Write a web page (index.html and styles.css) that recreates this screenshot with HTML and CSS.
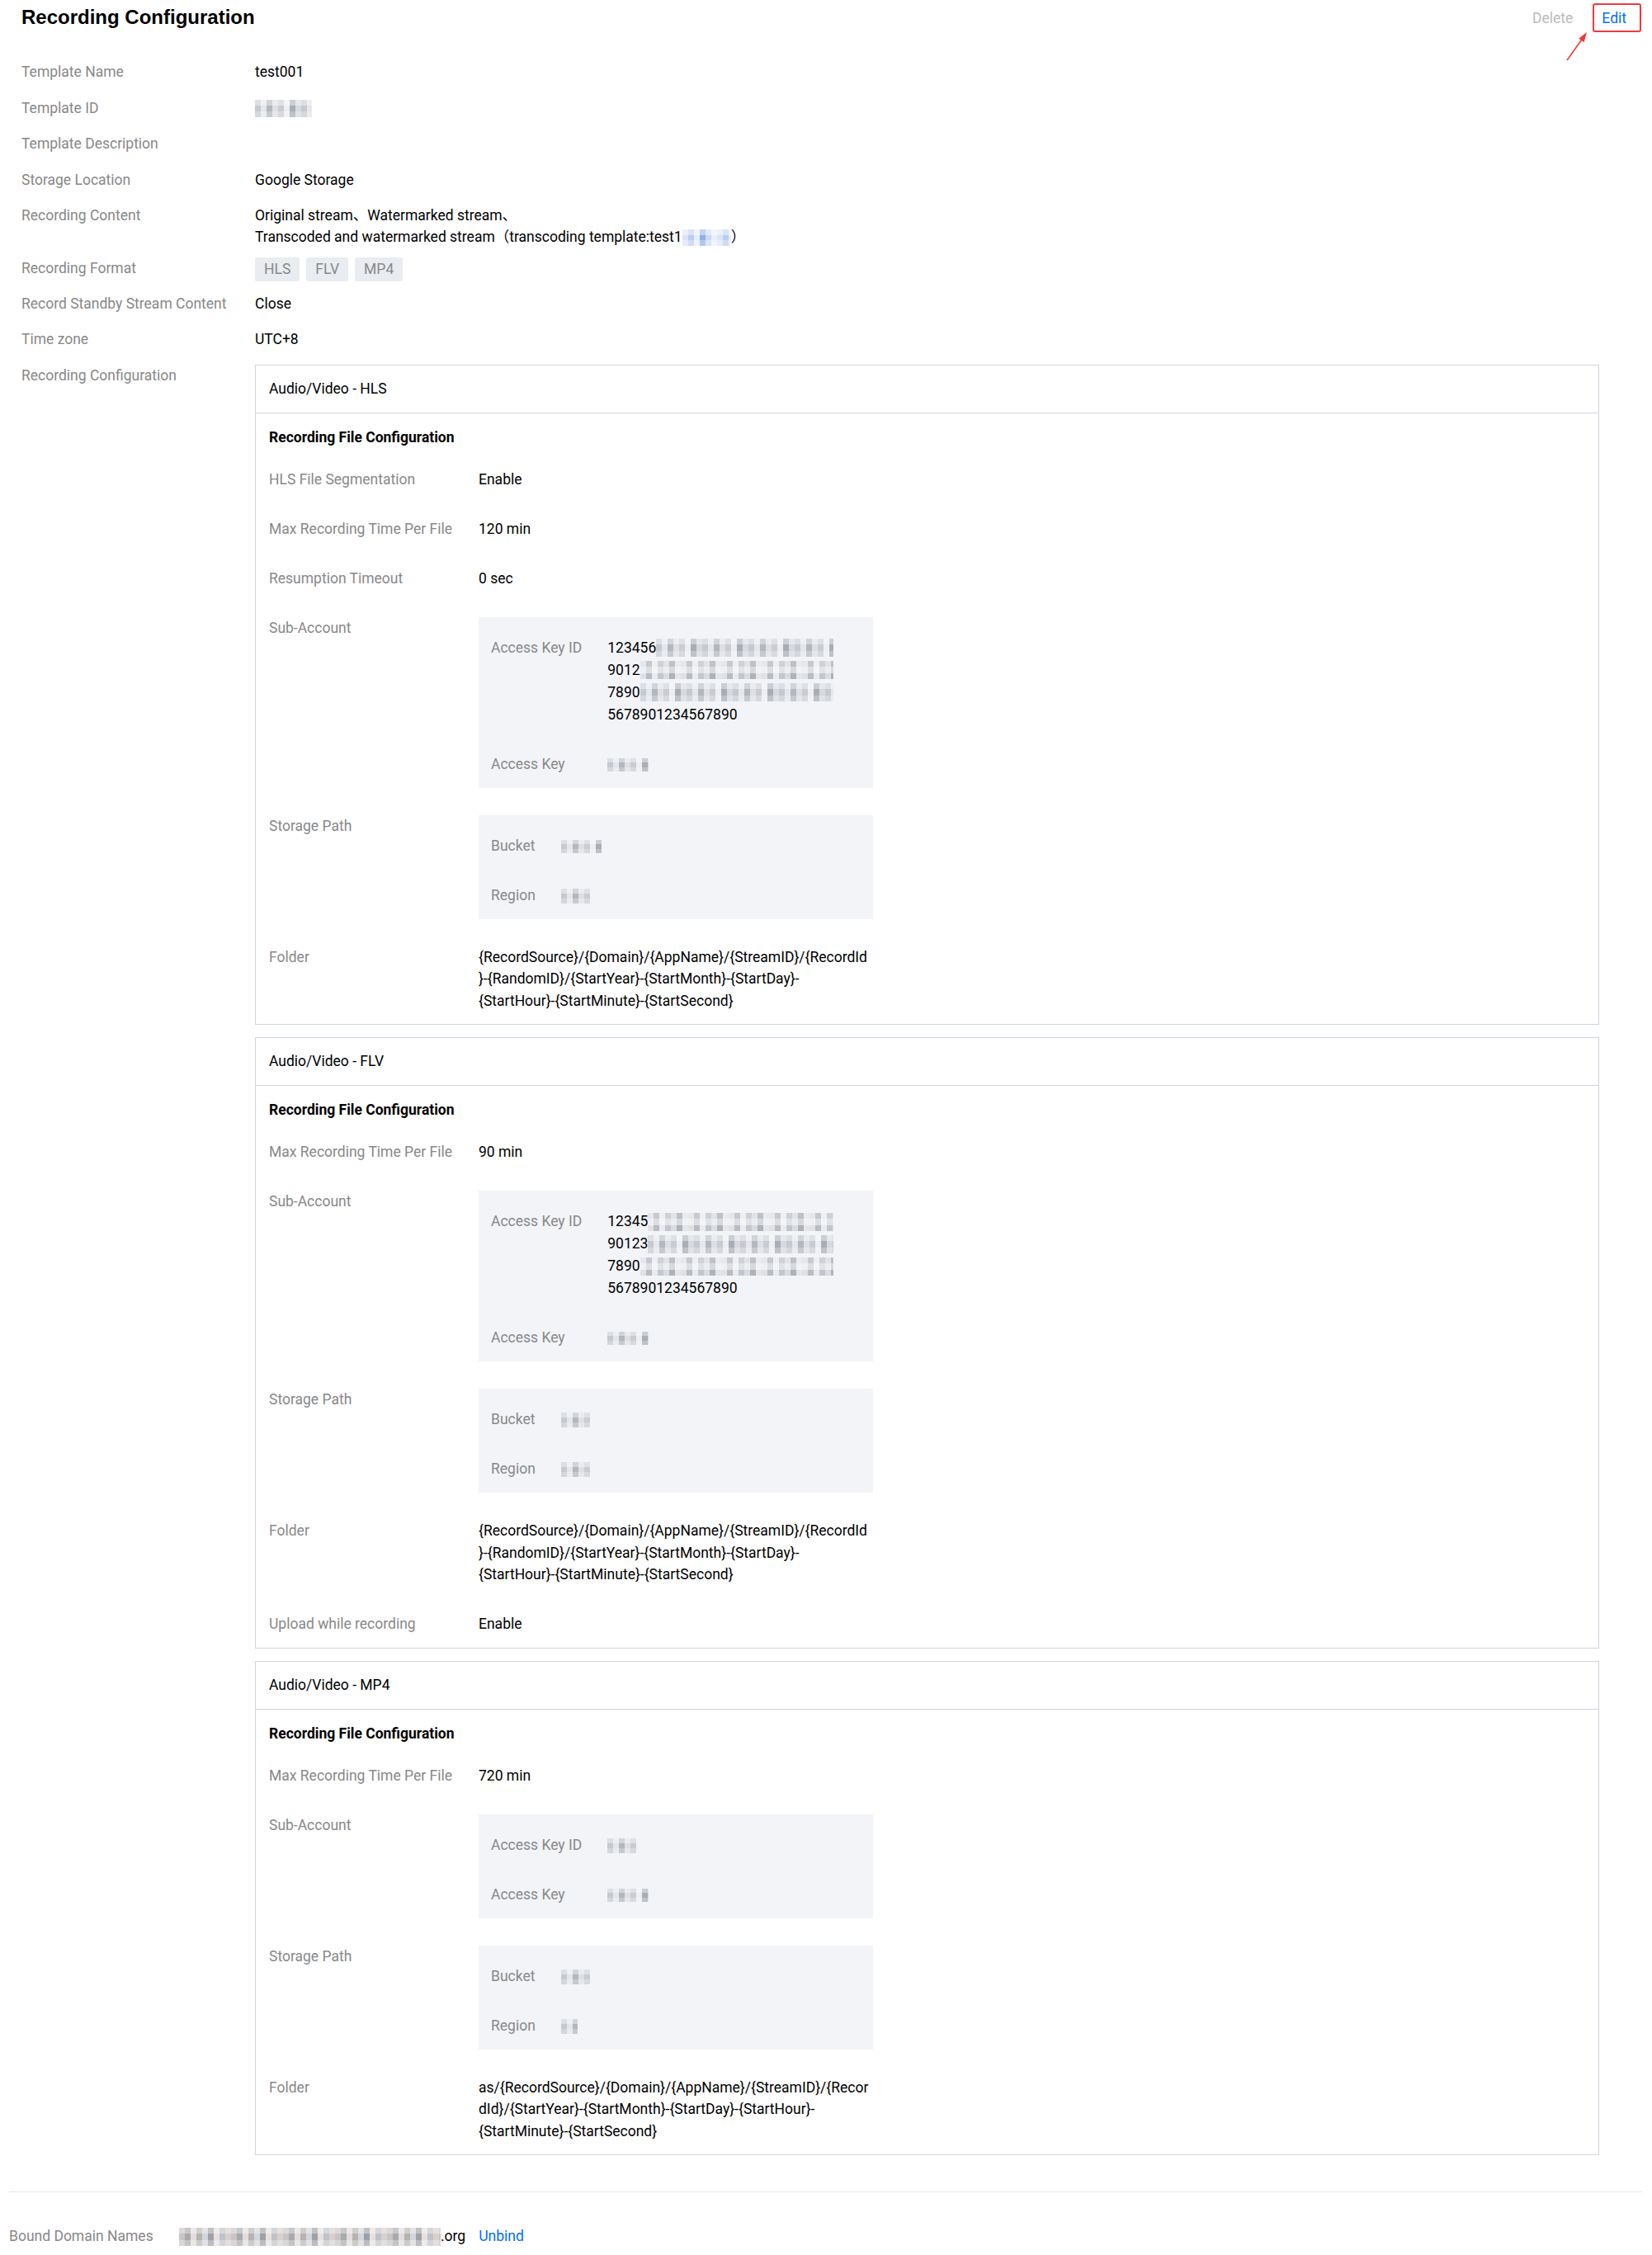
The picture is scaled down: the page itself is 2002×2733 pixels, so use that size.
FILE: index.html
```html
<!DOCTYPE html>
<html lang="en">
<head>
  <meta charset="UTF-8">
  <meta name="viewport" content="width=device-width, initial-scale=1.0">
  <title>Recording Configuration</title>
  <link rel="stylesheet" href="styles.css">
</head>
<body>
  <div class="page">
    <div class="detail-hd">
      <h2 class="title">Recording Configuration</h2>
      <div class="actions">
        <a class="btn-delete" href="#">Delete</a>
        <a class="btn-edit" href="#">Edit
          <svg class="arrow" width="32" height="42" viewBox="0 0 32 42">
            <path d="M4 38 L22.5 12" stroke="#f23a3a" stroke-width="1.6" fill="none"/>
            <polygon points="28,4 24.6,16.2 18.2,11.7" fill="#f23a3a"/>
          </svg>
        </a>
      </div>
    </div>

    <div class="info">
      <div class="row">
        <div class="row-label">Template Name</div>
        <div class="row-value">test001</div>
      </div>
      <div class="row">
        <div class="row-label">Template ID</div>
        <div class="row-value"><i class="mosaic mosaic-id"></i></div>
      </div>
      <div class="row">
        <div class="row-label">Template Description</div>
        <div class="row-value"></div>
      </div>
      <div class="row">
        <div class="row-label">Storage Location</div>
        <div class="row-value">Google Storage</div>
      </div>
      <div class="row">
        <div class="row-label">Recording Content</div>
        <div class="row-value">Original stream、Watermarked stream、<br>Transcoded and watermarked stream（transcoding template:test1<i class="mosaic mosaic-blue mosaic-tpl"></i>）</div>
      </div>
      <div class="row row-tags">
        <div class="row-label">Recording Format</div>
        <div class="row-value">
          <span class="tag">HLS</span><span class="tag">FLV</span><span class="tag">MP4</span>
        </div>
      </div>
      <div class="row">
        <div class="row-label">Record Standby Stream Content</div>
        <div class="row-value">Close</div>
      </div>
      <div class="row">
        <div class="row-label">Time zone</div>
        <div class="row-value">UTC+8</div>
      </div>
      <div class="row">
        <div class="row-label">Recording Configuration</div>
        <div class="row-value">

          <div class="card">
            <div class="card-hd">Audio/Video - HLS</div>
            <div class="card-bd">
              <div class="section-title">Recording File Configuration</div>
              <div class="field">
                <div class="field-label">HLS File Segmentation</div>
                <div class="field-value">Enable</div>
              </div>
              <div class="field">
                <div class="field-label">Max Recording Time Per File</div>
                <div class="field-value">120 min</div>
              </div>
              <div class="field">
                <div class="field-label">Resumption Timeout</div>
                <div class="field-value">0 sec</div>
              </div>
              <div class="field">
                <div class="field-label">Sub-Account</div>
                <div class="kv-box">
                  <div class="kv-label">Access Key ID</div>
                  <div class="kv-value">
                    <div class="key-line">123456<i class="mosaic"></i></div>
                    <div class="key-line">9012<i class="mosaic mosaic-alt"></i></div>
                    <div class="key-line">7890<i class="mosaic"></i></div>
                    <div>5678901234567890</div>
                  </div>
                  <div class="kv-label">Access Key</div>
                  <div class="kv-value"><i class="mosaic mosaic-ak"></i></div>
                </div>
              </div>
              <div class="field">
                <div class="field-label">Storage Path</div>
                <div class="kv-box">
                  <div class="kv-label">Bucket</div>
                  <div class="kv-value"><i class="mosaic mosaic-md"></i></div>
                  <div class="kv-label">Region</div>
                  <div class="kv-value"><i class="mosaic mosaic-sm"></i></div>
                </div>
              </div>
              <div class="field">
                <div class="field-label">Folder</div>
                <div class="field-value folder">{RecordSource}/{Domain}/{AppName}/{StreamID}/{RecordId<br>}-{RandomID}/{StartYear}-{StartMonth}-{StartDay}-<br>{StartHour}-{StartMinute}-{StartSecond}</div>
              </div>
            </div>
          </div>

          <div class="card">
            <div class="card-hd">Audio/Video - FLV</div>
            <div class="card-bd">
              <div class="section-title">Recording File Configuration</div>
              <div class="field">
                <div class="field-label">Max Recording Time Per File</div>
                <div class="field-value">90 min</div>
              </div>
              <div class="field">
                <div class="field-label">Sub-Account</div>
                <div class="kv-box">
                  <div class="kv-label">Access Key ID</div>
                  <div class="kv-value">
                    <div class="key-line">12345<i class="mosaic mosaic-alt"></i></div>
                    <div class="key-line">90123<i class="mosaic"></i></div>
                    <div class="key-line">7890<i class="mosaic mosaic-alt"></i></div>
                    <div>5678901234567890</div>
                  </div>
                  <div class="kv-label">Access Key</div>
                  <div class="kv-value"><i class="mosaic mosaic-ak"></i></div>
                </div>
              </div>
              <div class="field">
                <div class="field-label">Storage Path</div>
                <div class="kv-box">
                  <div class="kv-label">Bucket</div>
                  <div class="kv-value"><i class="mosaic mosaic-sm"></i></div>
                  <div class="kv-label">Region</div>
                  <div class="kv-value"><i class="mosaic mosaic-sm"></i></div>
                </div>
              </div>
              <div class="field">
                <div class="field-label">Folder</div>
                <div class="field-value folder">{RecordSource}/{Domain}/{AppName}/{StreamID}/{RecordId<br>}-{RandomID}/{StartYear}-{StartMonth}-{StartDay}-<br>{StartHour}-{StartMinute}-{StartSecond}</div>
              </div>
              <div class="field">
                <div class="field-label">Upload while recording</div>
                <div class="field-value">Enable</div>
              </div>
            </div>
          </div>

          <div class="card">
            <div class="card-hd">Audio/Video - MP4</div>
            <div class="card-bd">
              <div class="section-title">Recording File Configuration</div>
              <div class="field">
                <div class="field-label">Max Recording Time Per File</div>
                <div class="field-value">720 min</div>
              </div>
              <div class="field">
                <div class="field-label">Sub-Account</div>
                <div class="kv-box">
                  <div class="kv-label">Access Key ID</div>
                  <div class="kv-value"><i class="mosaic mosaic-sm"></i></div>
                  <div class="kv-label">Access Key</div>
                  <div class="kv-value"><i class="mosaic mosaic-ak"></i></div>
                </div>
              </div>
              <div class="field">
                <div class="field-label">Storage Path</div>
                <div class="kv-box">
                  <div class="kv-label">Bucket</div>
                  <div class="kv-value"><i class="mosaic mosaic-sm"></i></div>
                  <div class="kv-label">Region</div>
                  <div class="kv-value"><i class="mosaic mosaic-xs"></i></div>
                </div>
              </div>
              <div class="field">
                <div class="field-label">Folder</div>
                <div class="field-value folder">as/{RecordSource}/{Domain}/{AppName}/{StreamID}/{Recor<br>dId}/{StartYear}-{StartMonth}-{StartDay}-{StartHour}-<br>{StartMinute}-{StartSecond}</div>
              </div>
            </div>
          </div>

        </div>
      </div>
    </div>

    <div class="footer">
      <div class="footer-label">Bound Domain Names</div>
      <div class="footer-value"><i class="mosaic mosaic-domain"></i>.org<a class="btn-unbind" href="#">Unbind</a></div>
    </div>
  </div>
</body>
</html>
```

FILE: styles.css
```css
body {
  margin: 0;
  font-family: Roboto, "Noto Sans CJK SC", sans-serif;
  font-size: 17.5px;
  color: #000;
  background: #fff;
}
a {
  text-decoration: none;
}
.page {
  padding: 0 12px 0 11px;
}

/* header */
.detail-hd {
  display: flex;
  justify-content: space-between;
  align-items: center;
  height: 42px;
  padding: 0 19px 0 15px;
}
.title {
  margin: 0;
  font: bold 24px/42px "Liberation Sans", Arial, sans-serif;
  color: #000;
}
.actions {
  display: flex;
  gap: 35px;
  line-height: 26px;
  margin-top: 2px;
}
.btn-delete {
  color: #bbb;
}
.btn-edit {
  position: relative;
  color: #006eff;
}
.btn-edit::after {
  content: '';
  position: absolute;
  top: -5px;
  bottom: -4px;
  left: -11px;
  right: -18px;
  border: 2px solid #f0393f;
  border-radius: 3px;
}
.arrow {
  position: absolute;
  left: -46px;
  top: 26px;
}

/* info rows */
.info {
  margin-top: 32px;
  padding: 0 52px 0 15px;
}
.row {
  display: flex;
  line-height: 26px;
  margin-bottom: 17.5px;
}
.row:last-child {
  margin-bottom: 0;
}
.row-label {
  flex: none;
  width: 283px;
  color: #888;
}
.row-value {
  flex: 1;
  min-width: 0;
}
.row-tags {
  margin-top: -6px;
  margin-bottom: 14px;
}
.tag {
  display: inline-block;
  height: 29px;
  line-height: 29px;
  padding: 0 11px;
  margin-right: 8px;
  border-radius: 2px;
  background: #e9ecf1;
  color: #888;
}

/* cards */
.card {
  border: 1px solid #cfd5de;
  margin-bottom: 15px;
}
.card:last-child {
  margin-bottom: 0;
}
.card-hd {
  height: 57px;
  line-height: 57px;
  padding: 0 16px;
  border-bottom: 1px solid #cfd5de;
}
.card-bd {
  padding: 16px 16px 15px;
  line-height: 27px;
}
.section-title {
  font-weight: bold;
  margin-bottom: 24px;
}
.field {
  display: flex;
  margin-bottom: 33px;
}
.field:last-child {
  margin-bottom: 0;
}
.field-label {
  flex: none;
  width: 254px;
  color: #888;
}
.folder {
  white-space: nowrap;
  line-height: 26.5px;
}
.kv-box {
  display: grid;
  grid-template-columns: auto 1fr;
  column-gap: 31px;
  row-gap: 33px;
  box-sizing: border-box;
  width: 478px;
  padding: 24px 15px 15px;
  background: #f2f4f8;
}
.kv-label {
  color: #888;
}
.key-line {
  display: flex;
  align-items: center;
  width: 274px;
}
.key-line .mosaic {
  flex: 1;
  height: 22px;
}

/* redacted values */
.mosaic {
  display: inline-block;
  vertical-align: middle;
  width: 35px;
  height: 20px;
  background-image:
    linear-gradient(180deg, rgba(255,255,255,.4) 0 33%, rgba(255,255,255,0) 33% 66%, rgba(255,255,255,.25) 66%),
    repeating-linear-gradient(90deg, #c6c9cf 0 7px, #e4e6ea 7px 14px, #b3b7be 14px 21px, #dcdfe4 21px 28px, #caccd2 28px 35px, #eceef1 35px 42px, #a9adb5 42px 49px, #d6d9de 49px 56px);
}
.mosaic-alt {
  background-image:
    linear-gradient(180deg, rgba(255,255,255,.2) 0 33%, rgba(255,255,255,.5) 33% 66%, rgba(255,255,255,0) 66%),
    repeating-linear-gradient(90deg, #dfe1e5 0 7px, #b8bcc3 7px 14px, #e9ebee 14px 21px, #c3c6cc 21px 28px, #d9dce1 28px 35px, #aeb2b9 35px 42px, #e4e6e9 42px 49px);
}
.mosaic-blue {
  background-image:
    linear-gradient(180deg, rgba(255,255,255,.45) 0 33%, rgba(255,255,255,0) 33% 66%, rgba(255,255,255,.3) 66%),
    repeating-linear-gradient(90deg, #dbe4f5 0 7px, #b9cdee 7px 14px, #e6ecf8 14px 21px, #8fb0e6 21px 28px, #cad8f2 28px 35px, #e9eef9 35px 42px);
}
.mosaic-id {
  width: 69px;
  height: 21px;
}
.mosaic-tpl {
  width: 59px;
  height: 20px;
}
.mosaic-ak {
  width: 50px;
  height: 16px;
}
.mosaic-md {
  width: 49px;
  height: 16px;
}
.mosaic-sm {
  width: 35px;
  height: 18px;
}
.mosaic-xs {
  width: 20px;
  height: 18px;
}
.mosaic-domain {
  width: 317px;
  height: 22px;
  background-image:
    linear-gradient(180deg, rgba(255,255,255,.35) 0 33%, rgba(255,255,255,0) 33% 66%, rgba(255,255,255,.3) 66%),
    repeating-linear-gradient(90deg, #c9c4c6 0 7px, #a9aaae 7px 14px, #e2dcdc 14px 21px, #b8b3b1 21px 28px, #d3d6db 28px 35px, #9ea1a7 35px 42px, #e6e1df 42px 49px, #bfc2c8 49px 56px, #d8d0cd 56px 63px);
}

/* footer */
.footer {
  display: flex;
  margin-top: 44px;
  padding: 40px 0 8px;
  border-top: 1px solid #e5e5e5;
  line-height: 26px;
}
.footer-label {
  flex: none;
  width: 206px;
  color: #888;
}
.btn-unbind {
  margin-left: 16px;
  color: #006eff;
}
```
